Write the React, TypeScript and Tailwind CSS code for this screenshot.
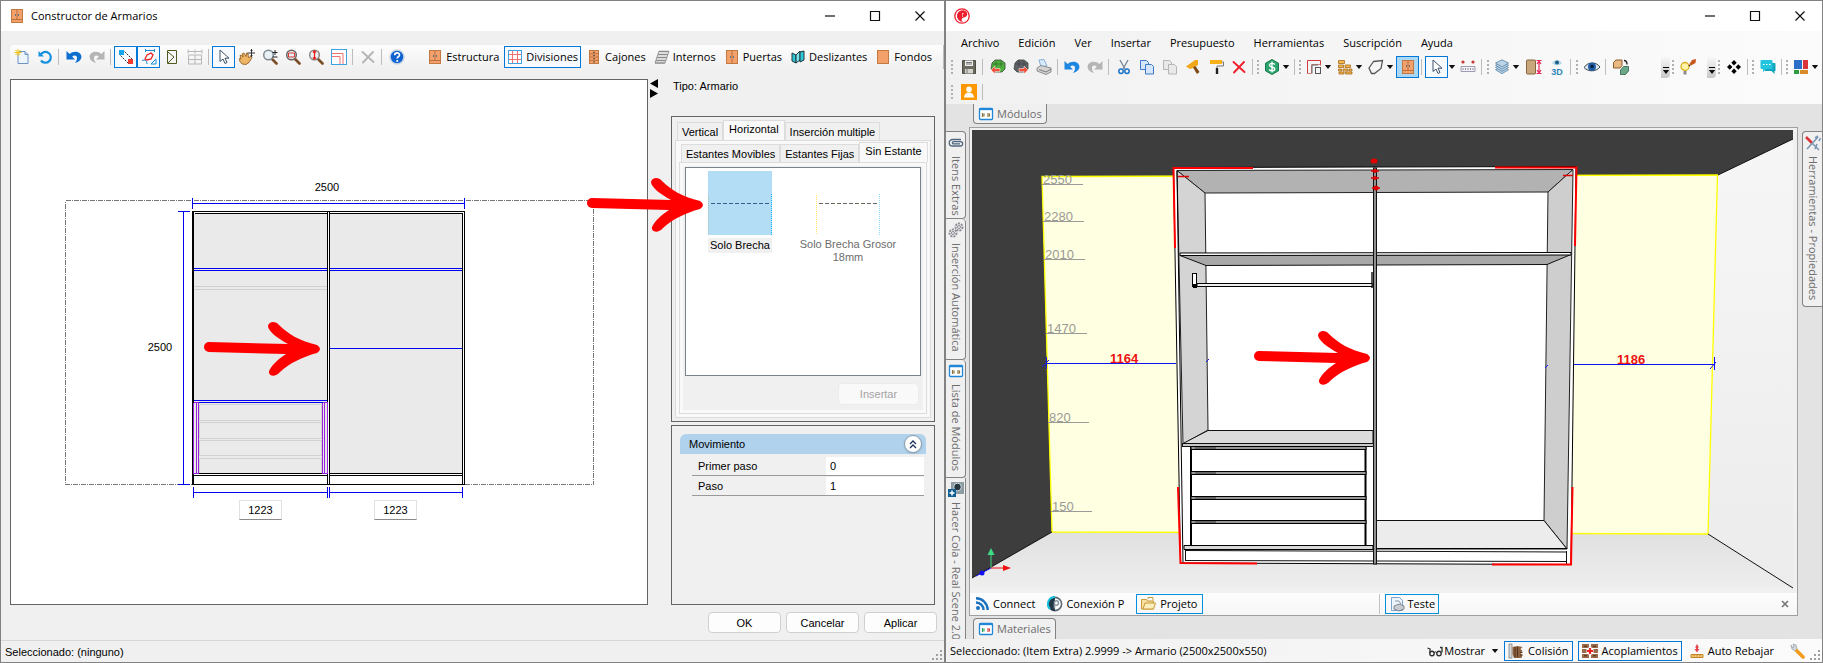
import React, { useState } from 'react';

type IconProps = { children: React.ReactNode; size?: string };

const Svg = ({ children, size = 'size-4' }: IconProps) => (
  <svg viewBox="0 0 16 16" className={`${size} shrink-0`} fill="none" aria-hidden="true">
    {children}
  </svg>
);

/* ---------- Iconos ---------- */

const WardrobeIcon = () => (
  <Svg>
    <rect x="2.5" y="1.5" width="11" height="13" fill="#f4a06b" stroke="#c27a45" />
    <path d="M8 1.5v10M2.5 11.5h11" stroke="#b86f3c" />
    <path d="M6.5 6v2M9.5 6v2" stroke="#5d7386" />
  </Svg>
);

const DoorsIcon = () => (
  <Svg>
    <rect x="2.5" y="1.5" width="11" height="13" fill="#f4a06b" stroke="#c27a45" />
    <path d="M8 1.5v13" stroke="#b86f3c" />
    <path d="M6.5 7v2M9.5 7v2" stroke="#5d7386" />
  </Svg>
);

const DrawersIcon = () => (
  <Svg>
    <rect x="3.5" y="1.5" width="9" height="13" fill="#f4a06b" stroke="#c27a45" />
    <path d="M3.5 4.8h9M3.5 8h9M3.5 11.3h9" stroke="#b86f3c" />
    <path d="M7 3.3h2M7 6.4h2M7 9.7h2M7 13h2" stroke="#5d4b3c" />
  </Svg>
);

const BackPanelIcon = () => (
  <Svg>
    <rect x="2.5" y="1.5" width="11" height="13" fill="#f4a06b" stroke="#c27a45" />
  </Svg>
);

const GridIcon = () => (
  <Svg>
    <rect x="1.5" y="1.5" width="13" height="13" fill="#fff" stroke="#3fa3e0" />
    <path d="M5.5 2v12M10.5 2v12M2 5.5h12M2 10.5h12" stroke="#f07070" />
  </Svg>
);

const InternalsIcon = () => (
  <Svg>
    <path d="M5 2.5h10M4 5.5h10M3 8.5h10M2 11.5h10M1 14h10" stroke="#8a8a8a" strokeWidth="1.6" />
    <path d="M5 2L1 14M15 2l-4 12" stroke="#9a9a9a" />
  </Svg>
);

const SlidingIcon = () => (
  <Svg>
    <path d="M2 4l4 2v8l-4-2z" fill="#2fc7d8" stroke="#20343a" />
    <path d="M6 6l4-4v9l-4 3z" fill="#7ae5ee" stroke="#20343a" />
    <path d="M10 3l4-1v9l-4 2z" fill="#2fc7d8" stroke="#20343a" />
  </Svg>
);

const NewIcon = () => (
  <Svg>
    <path d="M5 2.5h6l3 3v9H4V5" fill="#eef5fd" stroke="#6d94c4" />
    <path d="M11 2.5v3h3" fill="#bcd7f2" stroke="#6d94c4" />
    <path d="M4 0v7M.5 3.5h7M1.5 1l5 5M6.5 1l-5 5" stroke="#f0c419" />
  </Svg>
);

const RefreshIcon = () => (
  <Svg>
    <path d="M3.5 6A5.4 5.4 0 1 1 4 11.5" stroke="#1691e0" strokeWidth="2.2" />
    <path d="M1.5 2v5.5H7z" fill="#1691e0" />
  </Svg>
);

const UndoIcon = ({ color = '#0d6fd0' }: { color?: string }) => (
  <Svg>
    <path d="M.5 2v8.500H9L6.200 7.700C8 5.800 11 6.500 11 9c0 2-.8 3.500-2 5C13 13 15.700 10.500 15.400 7.300 15 2.800 8 .6 3.600 5.100z" fill={color} />
  </Svg>
);

const RedoIcon = () => (
  <Svg>
    <path d="M15.500 2v8.500H7l2.800-2.800C8 5.800 5 6.500 5 9c0 2 .8 3.500 2 5C3 13 .3 10.500.6 7.300 1 2.800 8 .6 12.400 5.100z" fill="#b5b5b5" />
  </Svg>
);

const SnapIcon = () => (
  <Svg>
    <rect x="1" y="1" width="5" height="5" fill="#16a6f0" />
    <rect x="10" y="10" width="5" height="5" fill="#f03a2e" />
    <path d="M6.500 2.500l8 8M2.500 6.500l8 8" stroke="#333" strokeDasharray="2 1" />
  </Svg>
);

const ShapesIcon = () => (
  <Svg>
    <path d="M4 1.500h9M4.500 0v3M13.500 0v3M1 11.500c3-1 5 0 5 3.500M10 15h5v-5z" stroke="#1b8fd6" />
    <path d="M4 10l2-4 4-2 2 2-2 4-4 1z" stroke="#f02020" strokeWidth="1.300" />
  </Svg>
);

const FlapIcon = () => (
  <Svg>
    <path d="M3.500 1.500h9v13h-9zM4 3l6 5-6 6" stroke="#4f5b1e" />
  </Svg>
);

const TableGridIcon = () => (
  <Svg>
    <path d="M1 2.500h14M1 .5v4M8 .5v4M15 .5v4M1.500 6h13v9h-13zM8 6v9M1.500 10.500h13" stroke="#b8b8b8" />
  </Svg>
);

const CursorIcon = () => (
  <Svg>
    <path d="M4 1v11.500l3-2.500 2 4.500 2-1-2-4.300h4z" fill="#fff" stroke="#3e4f66" />
  </Svg>
);

const PanIcon = () => (
  <Svg>
    <path d="M3 15c-2-2-3-4-2.500-5.500L2 10 1 6.500 2.500 6 4 8 3.500 4.500 5 4l2 3.500L7.500 4l1.500.5.5 4L12 7.500l1 1-3 5-3 2z" fill="#eeb566" stroke="#8a5418" strokeWidth=".8" />
    <path d="M12.500 0v8M8.500 4h7.500M11.500 1.500h2M11.500 6.500h2" stroke="#333" />
  </Svg>
);

const Lens = ({ children, ring = '#7f8c96' }: { children?: React.ReactNode; ring?: string }) => (
  <Svg>
    <path d="M10 10l4.500 4.500" stroke="#7a4d26" strokeWidth="2.600" strokeLinecap="round" />
    <circle cx="6.500" cy="6" r="4.800" fill="#e9f1f5" stroke={ring} strokeWidth="1.500" />
    {children}
  </Svg>
);

const CornerIcon = () => (
  <Svg>
    <rect x=".5" y=".5" width="15" height="15" fill="#fff" stroke="#3fa3e0" />
    <path d="M1 4.500h11V15M1 7.500h8V15" stroke="#f07070" />
  </Svg>
);

const DeleteIcon = ({ color = '#b5b5b5' }: { color?: string }) => (
  <Svg>
    <path d="M2.500 3l11 10M13 3L3 13.500" stroke={color} strokeWidth="1.900" strokeLinecap="round" />
  </Svg>
);

const HelpIcon = () => (
  <Svg>
    <circle cx="8" cy="8" r="7" fill="#0f62cf" stroke="#c9d6e6" strokeWidth="1.500" />
    <path d="M5.700 6.200c0-3 4.800-3 4.800-.3 0 1.700-2.300 1.800-2.300 3.600" stroke="#fff" strokeWidth="1.700" />
    <circle cx="8.200" cy="12" r="1.100" fill="#fff" />
  </Svg>
);

const SaveIcon = () => (
  <Svg>
    <path d="M1.500 1.500h13v13h-13z" fill="#6a6a60" stroke="#4d4d45" />
    <rect x="4" y="1.500" width="8" height="5.500" fill="#eee" />
    <rect x="4" y="10" width="8" height="4.500" fill="#d4d4cc" />
    <path d="M6 10v4M5 3.500h6M5 5h6" stroke="#777" />
  </Svg>
);

const CubeArrowIcon = ({ body, left }: { body: string; left?: boolean }) => (
  <Svg>
    <path d="M2 4l3-3h6l4 3v6l-3 3H4l-3-3z" fill={body} stroke="#3b4a38" strokeWidth=".8" />
    <path d="M3 5h10M6 2v6M11 2v6" stroke="#222" strokeOpacity=".35" />
    {left ? (
      <path d="M1 11l4-4v2.500h5v3H5V15z" fill="#f0503c" stroke="#fff" strokeWidth=".5" />
    ) : (
      <path d="M15 11l-4-4v2.500H6v3h5V15z" fill="#f0503c" stroke="#fff" strokeWidth=".5" />
    )}
  </Svg>
);

const PrinterIcon = () => (
  <Svg>
    <path d="M3 1l5-.5L11 7l-6 1z" fill="#d9ebfb" stroke="#6b9fd0" strokeWidth=".8" />
    <path d="M1 9l4-2.500L15 9v4l-5 2.500L1 12z" fill="#d4d4d4" stroke="#777" strokeWidth=".8" />
    <path d="M3 10.500l7 2.500 5-3" stroke="#666" strokeWidth=".8" />
  </Svg>
);

const ScissorsIcon = () => (
  <Svg>
    <path d="M4 1l5 9M12 1L7 10" stroke="#7a8a99" strokeWidth="1.400" />
    <circle cx="5" cy="12.300" r="2.200" stroke="#1a73c8" strokeWidth="1.500" />
    <circle cx="11" cy="12.300" r="2.200" stroke="#1a73c8" strokeWidth="1.500" />
  </Svg>
);

const CopyIcon = ({ line = '#3f78c8', fill = '#d5e6fa' }: { line?: string; fill?: string }) => (
  <Svg>
    <path d="M1.500 1.500h6l2 2v7h-8z" fill={fill} stroke={line} />
    <path d="M6.500 5.500h6l2 2v7.500h-8z" fill={fill} stroke={line} />
  </Svg>
);

const HammerIcon = () => (
  <Svg>
    <path d="M1 7.500L10 1h3v5L8 9 5 10z" fill="#f0a818" />
    <path d="M8 8.500l4 6.500 2.500-2-4-6z" fill="#7c4a16" />
  </Svg>
);

const RollerIcon = () => (
  <Svg>
    <rect x="2" y="1" width="12" height="4" fill="#f5b01a" />
    <path d="M14 3h1.500v4H9v3" stroke="#777" />
    <path d="M9 9v6" stroke="#222" strokeWidth="2.400" />
  </Svg>
);

const DollarIcon = () => (
  <Svg>
    <path d="M8 .5l6.500 3.700v7.600L8 15.500l-6.500-3.700V4.200z" fill="#2ba56d" stroke="#16784b" />
    <path d="M10.800 5.500C9.500 3.800 5.500 4 5.500 6.200 5.500 8.500 10.800 7.500 10.800 10c0 2.200-4.300 2.300-5.600.5M8 2.500v11" stroke="#fff" strokeWidth="1.300" />
  </Svg>
);

const WallIcon = () => (
  <Svg>
    <path d="M1.500 14.500v-13h13v5" stroke="#d33a3a" />
    <path d="M1.500 14.500h4v-9h9" stroke="#d98080" />
    <rect x="9.500" y="8.500" width="5" height="6" stroke="#555" />
    <path d="M6 14.500V6h6" stroke="#666" />
  </Svg>
);

const BricksIcon = () => (
  <Svg>
    <path d="M1.500 1.500h6v3h-6zM1.500 6h5v2.500h-5zM8 6h5.500v2.500H8zM1.500 10h3v2h-3zM6 10h5v2H6zM12 10h3v2h-3zM2 13h5v2H2zM8.500 13H15v2H8.500z" fill="#f4b84e" stroke="#a8691a" strokeWidth=".8" />
  </Svg>
);

const PolyIcon = () => (
  <Svg>
    <path d="M5.500 2.500l9-1-1.500 8-6.500 5H3.500L1 9z" stroke="#555" strokeWidth="1.300" />
  </Svg>
);

const MeasureIcon = () => (
  <Svg>
    <circle cx="3" cy="3" r="1.600" fill="#cc3333" />
    <circle cx="13" cy="3" r="1.600" fill="#cc3333" />
    <path d="M1 7.500h14v5H1z" fill="#f4f4f8" stroke="#9c9cae" />
    <path d="M3 9v2M5.500 9v2M8 9v2M10.500 9v2M13 9v2" stroke="#8888a0" />
  </Svg>
);

const LayersIcon = () => (
  <Svg>
    {[7.5, 5.200, 3, 0.8].map((y) => (
      <path key={y} d={`M8 ${y}l6.500 3.200-6.500 4-6.500-4z`} fill="#b9d4e8" stroke="#5c84a6" strokeWidth=".8" />
    ))}
  </Svg>
);

const DoorHeightIcon = () => (
  <Svg>
    <rect x=".5" y="1" width="9" height="14" rx="1" fill="#c9a67b" stroke="#86643d" />
    <path d="M10.500 1.500h5M10.500 14.500h5M13 2v12M11 5l2-3 2 3M11 11l2 3 2-3" stroke="#e8275a" strokeWidth="1.200" />
  </Svg>
);

const Eye3DIcon = () => (
  <Svg>
    <path d="M3 4c3-4 7-4 10 0-3 3-7 3-10 0z" fill="#b7d9e8" />
    <circle cx="8" cy="3.500" r="2" fill="#1c5f86" />
    <text x="8" y="15.500" textAnchor="middle" fontSize="9" fontWeight="700" fontFamily="Liberation Sans, sans-serif" fill="#2e86b8">
      3D
    </text>
  </Svg>
);

const EyeIcon = () => (
  <Svg>
    <path d="M0 8.500C4 2.500 12 2.500 16 8 12 13 4 13 0 8.500z" fill="#dfe7ee" stroke="#33414f" />
    <circle cx="8" cy="7.800" r="4" fill="#1c5ea8" />
    <circle cx="8" cy="7.500" r="1.700" fill="#0b1d33" />
  </Svg>
);

const BoxesIcon = () => (
  <Svg>
    <path d="M.5 3.500l2.500-2.500h6v5.500L7 9H.5z" fill="#e9b983" stroke="#8b5c2d" strokeWidth="1" />
    <path d="M7.500 11l3-3.500h5V12l-3 3.500h-5z" fill="#6aa889" stroke="#2f6049" strokeWidth=".8" />
    <path d="M11 1.500c2 0 3 1 3 4" stroke="#222" strokeWidth="1.400" />
  </Svg>
);

const BulbIcon = () => (
  <Svg>
    <circle cx="5" cy="7.500" r="4" fill="#fff3a8" stroke="#dcae23" strokeWidth="1.300" />
    <path d="M3.500 12h3v3.500h-3z" fill="#8d8d8d" />
    <path d="M10 6l-1 1" stroke="#222" strokeWidth="1.500" />
    <path d="M16 0l-.5 4-4.500 2.500-1.500-1.500L12 1z" fill="#c8561a" />
  </Svg>
);

const DiamondsIcon = () => (
  <Svg>
    <path d="M8 1l2.700 2.700L8 6.400 5.300 3.700zM8 9.600l2.700 2.700L8 15l-2.700-2.700zM3.700 5.300L6.400 8l-2.700 2.700L1 8zM12.300 5.300L15 8l-2.700 2.700L9.600 8z" fill="#000" />
  </Svg>
);

const ChatIcon = () => (
  <Svg>
    <path d="M4 4h10.500a1 1 0 0 1 1 1v7h-1v3l-3-3H5z" fill="#0ea5bd" />
    <path d="M1.500 1h10a1 1 0 0 1 1 1v7a1 1 0 0 1-1 1H6l-3 3v-3H1.500a1 1 0 0 1-1-1V2a1 1 0 0 1 1-1z" fill="#22c5dd" />
    <path d="M3 5.500h1.500M6 5.500h1.500M9 5.500h1.500" stroke="#fff" strokeWidth="1.200" />
  </Svg>
);

const ThemeIcon = () => (
  <Svg>
    <rect x="1" y="1" width="8" height="9" fill="#2b6fc9" />
    <rect x="10" y="1" width="5" height="9" fill="#d8343a" />
    <rect x="1" y="11" width="5" height="4" fill="#2e9c42" />
    <rect x="7" y="11" width="8" height="4" fill="#d98a2b" />
  </Svg>
);

const UserIcon = () => (
  <Svg>
    <rect width="16" height="16" fill="#ff9800" />
    <circle cx="8" cy="5.300" r="2.800" fill="#fff" />
    <path d="M3 13.500c0-2.500 2-4.500 3.500-5h3c1.500.5 3.500 2.500 3.500 5z" fill="#fff" />
  </Svg>
);

const ModuleIcon = ({ a = '#8a7440', b = '#8a7440' }: { a?: string; b?: string }) => (
  <Svg>
    <rect x="1.500" y="2.500" width="13" height="11" rx="1" fill="#fff" stroke="#1f86d8" strokeWidth="1.300" />
    <path d="M1 3.300h14" stroke="#1f86d8" strokeWidth="1.700" />
    <path d="M4.500 7v4M6 7.500v3" stroke={a} strokeWidth="1.200" />
    <path d="M10 7v4M11.500 7.500v3" stroke={b} strokeWidth="1.200" />
  </Svg>
);

const ClipIcon = () => (
  <Svg>
    <path d="M13 4.500H4.500a3.200 3.200 0 0 0 0 6.500H12.500a2 2 0 0 0 0-4.300H5.500a1 1 0 0 0 0 2.200H12" stroke="#4f667e" strokeWidth="1.300" />
  </Svg>
);

const GearsIcon = () => (
  <Svg>
    <circle cx="11" cy="5" r="3.500" stroke="#8c8c96" strokeWidth="2" strokeDasharray="2 1" />
    <circle cx="11" cy="5" r="1.500" stroke="#8c8c96" />
    <circle cx="5" cy="11" r="3.500" stroke="#8c8c96" strokeWidth="2" strokeDasharray="2 1" />
    <circle cx="5" cy="11" r="1.500" stroke="#8c8c96" />
  </Svg>
);

const CameraPlusIcon = () => (
  <Svg>
    <rect x="3" y="1" width="13" height="12" fill="#8d9ba3" />
    <circle cx="9.500" cy="6" r="3.800" fill="#263640" stroke="#d4dde2" />
    <rect x="0" y="8" width="8" height="8" fill="#0f5f92" />
    <path d="M4 9.500v5M1.500 12h5" stroke="#fff" strokeWidth="1.500" />
  </Svg>
);

const ToolsIcon = () => (
  <Svg>
    <path d="M1 2l6 6" stroke="#d8343a" strokeWidth="2.600" />
    <path d="M7 8l7 7M13 2L2 14" stroke="#7b96b5" strokeWidth="1.600" />
    <path d="M10 3l3-2M14 6l1.500-3M10 14l2-5" stroke="#7b96b5" strokeWidth="1.600" />
  </Svg>
);

const FeedIcon = () => (
  <Svg>
    <circle cx="4" cy="12" r="2" fill="#1870c0" />
    <path d="M2 6.500a7.500 7.500 0 0 1 7.500 7.500M2 2.300A11.700 11.700 0 0 1 13.700 14" stroke="#1870c0" strokeWidth="2.400" />
  </Svg>
);

const ConnectPIcon = () => (
  <Svg>
    <circle cx="8" cy="8" r="6.600" fill="#fff" stroke="#5d6a73" strokeWidth="1.600" />
    <path d="M8 1a7 7 0 0 0 0 14z" fill="#243746" />
    <path d="M8 1a7 7 0 0 0-5 12" stroke="#16c0dc" strokeWidth="2" />
    <path d="M7.500 12.500V6.500c0-2.500 4-2.500 4 .5s-4 2.500-4 1" stroke="#8896a0" strokeWidth="1.500" />
  </Svg>
);

const FolderIcon = () => (
  <Svg>
    <path d="M1.500 3.500h5l1 1.500h6v8h-12z" fill="#f7e0a0" stroke="#c79a35" />
    <path d="M3 13l2-6h10.500l-2 6z" fill="#fbeebd" stroke="#c79a35" />
    <path d="M8 3V1.500h5v3" stroke="#c79a35" />
  </Svg>
);

const PageIcon = () => (
  <Svg>
    <path d="M2.500 1.500h8l3 3v10h-11z" fill="#eef4fb" stroke="#7da3cf" />
    <path d="M5 10l5-2 5 2v3l-5 2-5-2z" fill="#c9ccd2" stroke="#6d727c" strokeWidth=".8" />
    <path d="M6 5h4l2 3" stroke="#8d96a5" />
  </Svg>
);

const GlassesIcon = () => (
  <Svg>
    <path d="M.5 5l2.500 1v4M13 4.500h2v5" stroke="#333" strokeWidth="1.300" />
    <circle cx="5" cy="10.500" r="2.200" stroke="#333" strokeWidth="1.400" />
    <circle cx="12" cy="10.500" r="2.200" stroke="#333" strokeWidth="1.400" />
    <path d="M7.200 10c.5-1.500 2-1.500 2.600 0" stroke="#333" />
  </Svg>
);

const CollisionIcon = () => (
  <Svg>
    <rect x="1" y="1" width="3" height="14" fill="#d6d6d6" stroke="#777" strokeWidth=".7" />
    <path d="M4.500 4l5-1 5 1-2 2 2 2-2 2 2 2-1 3H6l-1.500-4z" fill="#8d6140" />
    <path d="M7 4v10M9.500 4v10M12 9.500h2.500M12 12h2.500" stroke="#4d2f18" strokeWidth=".9" />
  </Svg>
);

const CouplingIcon = () => (
  <Svg>
    <path d="M0 1h7v14H0zM9 1h7v14H9z" fill="#9a6a4a" />
    <path d="M0 5.500h16M0 10.500h16" stroke="#fff" />
    <path d="M2 3.300h3M11 3.300h3M2 12.800h3M11 12.800h3" stroke="#4d2f18" />
    <path d="M8 4.500v7M4.500 8h7" stroke="#fff" strokeWidth="4" />
    <path d="M8 5v6M5 8h6" stroke="#ee2222" strokeWidth="2.200" />
  </Svg>
);

const LowerIcon = () => (
  <Svg>
    <path d="M8 1l2 3.500H9V6h1.500L8 9.500 5.500 6H7V4.500H6z" fill="#e8454e" />
    <path d="M2 11.500h12v3H2z" fill="#f6c877" stroke="#c28527" />
    <path d="M5 12v1.500M8 12v1.500M11 12v1.500" stroke="#c28527" />
  </Svg>
);

const WrenchIcon = () => (
  <Svg>
    <path d="M2 2l1 4 3 2 2-2-1-4-3-1 1 3-1 1z" fill="#d4d9df" stroke="#98a1ab" strokeWidth=".8" />
    <path d="M8 8l6 6" stroke="#f29b1d" strokeWidth="3.600" strokeLinecap="round" />
  </Svg>
);

const LogoIcon = () => (
  <Svg>
    <circle cx="8" cy="8" r="7.200" fill="#fff" stroke="#ed1c2e" strokeWidth="1.300" />
    <path d="M8.500 2.200A5.800 5.800 0 1 0 9 13.800C7 12.500 7.500 10.500 9 9.700 11.500 9.300 13.300 8 13.300 6.200 13.300 3.800 11 2.200 8.500 2.200z" fill="#ed1c2e" />
    <path d="M8.500 5v4M8.500 5.500h1.500" stroke="#fff" strokeWidth=".7" strokeOpacity=".8" />
  </Svg>
);

const RedArrow = () => (
  <path
    d="M5 20L84 22C73 16 64 9 64 4 65 -1 72 -1 75 3 84 12 96 19 113 23Q119 27 113 31C98 35 86 41 76 50 71 56 64 54 65 49 68 43 74 37 82 32L5 30A5 5 0 0 1 5 20Z"
    fill="#ff0000"
  />
);

/* ---------- Piezas comunes ---------- */

type ToolProps = { label: string; active?: boolean; children: React.ReactNode };

const Tool = ({ label, active, children }: ToolProps) => (
  <button
    type="button"
    aria-label={label}
    title={label}
    className={`flex h-[22px] w-[23px] shrink-0 items-center justify-center border ${
      active ? 'border-[#0078d7] bg-[#f7fbff]' : 'border-transparent'
    }`}
  >
    {children}
  </button>
);

const Sep = ({ wide }: { wide?: boolean }) => (
  <span className={`h-4 w-px shrink-0 bg-[#bdbdbd] ${wide ? 'mr-[3px] ml-[2px]' : 'mx-[2px]'}`} />
);

const Grip = () => (
  <span className="flex w-[6px] shrink-0 flex-col items-center gap-[2px]">
    {[0, 1, 2, 3].map((i) => (
      <span key={i} className="size-[2px] bg-[#b0b0b0]" />
    ))}
  </span>
);

const Caret = () => (
  <svg viewBox="0 0 10 5" className="h-[4px] w-[8px] shrink-0" aria-hidden="true">
    <path d="M1 0h8L5 5z" fill="#111" />
  </svg>
);

const CaretTool = ({ label, children }: { label: string; children: React.ReactNode }) => (
  <button type="button" aria-label={label} title={label} className="flex h-[22px] w-[31px] shrink-0 items-center justify-between pr-[2px] pl-[3px]">
    {children}
    <Caret />
  </button>
);

const Overflow = () => (
  <span className="flex h-[22px] w-[9px] shrink-0 flex-col items-center justify-end gap-[2px] rounded-br bg-gradient-to-b from-transparent to-[#c8c8c8] pb-1">
    <span className="h-px w-[6px] bg-black" />
    <Caret />
  </span>
);

const ResizeGrip = () => (
  <svg viewBox="0 0 12 12" className="size-3 shrink-0 self-end" fill="#a0a0a0" aria-hidden="true">
    <path d="M8 0h2v2H8zM8 4h2v2H8zM4 4h2v2H4zM8 8h2v2H8zM4 8h2v2H4zM0 8h2v2H0z" />
  </svg>
);

const WindowButtons = () => (
  <div className="flex">
    {[
      { label: 'Minimizar', d: 'M3 8h10' },
      { label: 'Maximizar', d: 'M4 3.500h8.500v9H3.500v-9z' },
      { label: 'Cerrar', d: 'M3.500 3.500l9 9M12.500 3.500l-9 9' },
    ].map((b) => (
      <button key={b.label} type="button" aria-label={b.label} className="flex h-[30px] w-[45px] items-center justify-center">
        <svg viewBox="0 0 16 16" className="size-4" fill="none" stroke="#111" strokeWidth="1.200">
          <path d={b.d} />
        </svg>
      </button>
    ))}
  </div>
);

/* ---------- Constructor de Armarios ---------- */

const modes = [
  { name: 'Estructura', icon: <WardrobeIcon /> },
  { name: 'Divisiones', icon: <GridIcon /> },
  { name: 'Cajones', icon: <DrawersIcon /> },
  { name: 'Internos', icon: <InternalsIcon /> },
  { name: 'Puertas', icon: <DoorsIcon /> },
  { name: 'Deslizantes', icon: <SlidingIcon /> },
  { name: 'Fondos', icon: <BackPanelIcon /> },
];

const BuilderToolbar = () => {
  const [mode, setMode] = useState('Divisiones');
  return (
    <div className="mt-[14px] ml-[9px] flex h-6 shrink-0 items-center justify-between rounded-l border-r border-[#bdbdbd] bg-gradient-to-b from-[#fdfdfd] to-[#f0f0f0] pr-2">
      <div className="flex items-center">
        <Tool label="Nuevo"><NewIcon /></Tool>
        <Tool label="Recargar"><RefreshIcon /></Tool>
        <Sep wide />
        <Tool label="Deshacer"><UndoIcon /></Tool>
        <Tool label="Rehacer"><RedoIcon /></Tool>
        <Sep wide />
        <Tool label="Ajustar" active><SnapIcon /></Tool>
        <Tool label="Formas" active><ShapesIcon /></Tool>
        <Tool label="Apertura"><FlapIcon /></Tool>
        <Tool label="Tabla"><TableGridIcon /></Tool>
        <Sep wide />
        <Tool label="Seleccionar" active><CursorIcon /></Tool>
        <Tool label="Mover"><PanIcon /></Tool>
        <Tool label="Zoom"><Lens><path d="M13 1v5M10.500 3.500h5M10.500 8h5" stroke="#222" /></Lens></Tool>
        <Tool label="Zoom ventana"><Lens ring="#6b6560"><path d="M3.500 4h6v4h-6z" stroke="#d93636" /></Lens></Tool>
        <Tool label="Zoom total"><Lens ring="#8a8480"><path d="M6.500 2v8M5 3.500L6.500 2 8 3.500M5 8.500L6.500 10 8 8.500" stroke="#f02020" strokeWidth="1.300" /></Lens></Tool>
        <Tool label="Esquina"><CornerIcon /></Tool>
        <Sep wide />
        <Tool label="Eliminar"><DeleteIcon /></Tool>
        <Sep wide />
        <Tool label="Ayuda"><HelpIcon /></Tool>
      </div>
      <div className="flex items-center gap-[2px]">
        {modes.map((m) => (
          <button
            key={m.name}
            type="button"
            onClick={() => setMode(m.name)}
            className={`flex h-[22px] items-center gap-[3px] border px-[2px] ${
              mode === m.name ? 'border-[#0078d7] bg-[#f7fbff]' : 'border-transparent'
            }`}
          >
            {m.icon}
            <span>{m.name}</span>
          </button>
        ))}
      </div>
    </div>
  );
};

const FrontView = () => (
  <svg viewBox="11 80 636 524" className="min-h-0 w-full flex-1" fill="none" shapeRendering="crispEdges">
    <rect x="65.500" y="200.500" width="528" height="284" stroke="#777" strokeDasharray="5 1 1 1" />
    <rect x="193" y="211" width="271" height="273" fill="#fff" />
    <rect x="194" y="213" width="269" height="261" fill="#eaeaea" />

    {/* barra y cajones */}
    <path d="M194 286.500h134M194 289.500h134" stroke="#cfcfcf" />
    <path d="M199.500 404.500h122v16h-122zM199.500 422.500h122v16h-122zM199.500 440.500h122v15h-122zM199.500 458.500h122v15h-122z" stroke="#d2d2d2" />

    {/* casco */}
    <path d="M192.500 211.500h272v273h-272zM194.500 213.500h268v271M193.500 212v272M194 473.500h268M194 475.500h268" stroke="#000" />
    <rect x="328" y="212" width="1" height="272" fill="#fff" />
    <path d="M327.500 212v272M329.500 212v272" stroke="#000" />

    {/* divisiones */}
    <path d="M194 268.500h133M194 270.500h133M330 268.500h132M330 270.500h132M194 400.500h133M194 402.500h133M330 348.500h132" stroke="#0000ee" />
    <path d="M193.500 402.500v71M196.500 402.500v71M198.500 402.500v71M322.500 402.500v71M324.500 402.500v71M327.500 402.500v71M193.500 402.500h5M193.500 473.500h5M322.500 402.500h5M322.500 473.500h5" stroke="#9a1fd8" />

    {/* cotas */}
    <path d="M192 203.500h273M192.500 198v11M464.500 198v11M183.500 211v274M178 211.500h12M178 484.500h12M193 492.500h134M330 492.500h132M193.500 487v11M327.500 487v11M329.500 487v11M462.500 487v11" stroke="#0000ee" />
    <g fontSize="11" fill="#000" textAnchor="middle" fontFamily="Liberation Sans, sans-serif">
      <text x="327" y="191">2500</text>
      <text x="160" y="351">2500</text>
    </g>
    <foreignObject x="239" y="500" width="43" height="21">
      <input aria-label="Ancho izquierdo" defaultValue="1223" className="block h-5 w-full border border-[#e2e2e2] border-b-[#8a8a8a] bg-white text-center text-[11px]" />
    </foreignObject>
    <foreignObject x="374" y="500" width="43" height="21">
      <input aria-label="Ancho derecho" defaultValue="1223" className="block h-5 w-full border border-[#e2e2e2] border-b-[#8a8a8a] bg-white text-center text-[11px]" />
    </foreignObject>
    <g transform="translate(204 322)" shapeRendering="auto">
      <RedArrow />
    </g>
  </svg>
);

const GapPreview = ({ selected }: { selected?: boolean }) => (
  <svg viewBox="0 0 64 64" className={`size-16 ${selected ? 'bg-[#b3dcf5]' : ''}`} fill="none" shapeRendering="crispEdges" aria-hidden="true">
    <path d="M3 32.500h59" stroke={selected ? '#3b5a86' : '#66665a'} strokeDasharray="4 2" />
    <path d="M.5 24v40" stroke={selected ? '#9ccbb8' : '#ffe45c'} strokeDasharray="1 1" />
    <path d="M63.500 23v41" stroke={selected ? '#10b8ff' : '#8fd8ff'} strokeDasharray="1 1" />
  </svg>
);

type TabsProps = { items: string[]; value: string; onChange: (v: string) => void };

const TabRow = ({ items, value, onChange }: TabsProps) => (
  <div className="flex h-5 items-end" role="tablist">
    {items.map((t) => (
      <button
        key={t}
        type="button"
        role="tab"
        aria-selected={t === value}
        onClick={() => onChange(t)}
        className={`border border-b-0 border-[#dcdcdc] whitespace-nowrap ${t === value ? 'h-5 bg-[#f9f9f9] px-[5px] pb-1' : 'h-[18px] bg-[#f0f0f0] px-1'}`}
      >
        {t}
      </button>
    ))}
  </div>
);

const DivisionPanel = () => {
  const [direction, setDirection] = useState('Horizontal');
  const [shelf, setShelf] = useState('Sin Estante');
  return (
    <section className="border border-[#646464] p-[3px]">
      <div className="pl-[2px]">
        <TabRow items={['Vertical', 'Horizontal', 'Inserción multiple']} value={direction} onChange={setDirection} />
      </div>
      <div className="border border-[#dcdcdc] bg-[#f9f9f9] px-[3px] pt-px pb-[3px]">
        <div className="pl-[2px]">
          <TabRow items={['Estantes Movibles', 'Estantes Fijas', 'Sin Estante']} value={shelf} onChange={setShelf} />
        </div>
        <div className="border border-[#dcdcdc] bg-[#f9f9f9] p-[3px]">
          <div className="bg-[#f0f0f0] px-[2px] pt-px pb-[5px]">
            <div className="relative flex h-[209px] items-start border border-[#7a828c] bg-white pt-[3px]">
              <button type="button" className="flex w-[108px] flex-col items-center gap-[3px]">
                <GapPreview selected />
                <span className="bg-[#f0f0f0] px-[2px] leading-[15px]">Solo Brecha</span>
              </button>
              <button type="button" className="flex w-[108px] flex-col items-center gap-[3px] text-[#6d6d6d]">
                <GapPreview />
                <span className="leading-[13px]">
                  Solo Brecha Grosor
                  <br />
                  18mm
                </span>
              </button>
              <svg viewBox="0 0 118 54" className="pointer-events-none absolute top-[10px] -left-[99px] z-10 h-[54px] w-[118px] overflow-visible" aria-hidden="true">
                <RedArrow />
              </svg>
            </div>
            <div className="mt-[7px] flex justify-end pr-[2px]">
              <button type="button" disabled className="h-[22px] w-[81px] rounded border border-[#ececec] bg-[#f9f9f9] text-[#a3a3a3]">
                Insertar
              </button>
            </div>
          </div>
        </div>
      </div>
    </section>
  );
};

const MovementPanel = () => (
  <section className="flex-1 border border-[#646464] px-2 pt-2">
    <div className="flex h-5 items-center justify-between rounded-t-md bg-[#b0d2ec] pr-1 pl-[9px]">
      <h2>Movimiento</h2>
      <button type="button" aria-label="Contraer" className="flex size-[18px] items-center justify-center rounded-full border border-[#8c9cb0] bg-white shadow">
        <svg viewBox="0 0 10 10" className="size-[10px]" fill="none" stroke="#1c2f5c" strokeWidth="1.300">
          <path d="M2 5l3-3 3 3M2 9l3-3 3 3" />
        </svg>
      </button>
    </div>
    <div className="mt-[2px] mr-[2px] ml-3">
      {[
        { id: 'primer-paso', label: 'Primer paso', value: '0' },
        { id: 'paso', label: 'Paso', value: '1' },
      ].map((row) => (
        <div key={row.id} className="flex h-5 items-center border-b border-[#9a9a9a] pl-[6px]">
          <label htmlFor={row.id} className="flex-1">{row.label}</label>
          <input id={row.id} defaultValue={row.value} className="h-[18px] w-[98px] bg-white pl-1" />
        </div>
      ))}
    </div>
  </section>
);

const BuilderWindow = () => (
  <div className="flex min-h-0 min-w-0 flex-col border border-[#828282] bg-[#f0f0f0]">
    <header className="flex h-[30px] shrink-0 items-center justify-between bg-white pr-[2px] pl-2">
      <div className="flex items-center gap-[6px]">
        <WardrobeIcon />
        <h1>Constructor de Armarios</h1>
      </div>
      <WindowButtons />
    </header>
    <BuilderToolbar />

    <main className="flex min-h-0 flex-1 px-[9px] pt-[10px] font-['Liberation_Sans',Arial,sans-serif] text-[11px]">
      <div className="flex min-w-0 flex-1 flex-col border border-[#646464] bg-white">
        <FrontView />
      </div>
      <div className="w-[23px] shrink-0 pl-[2px]">
        <svg viewBox="0 0 8 20" className="h-5 w-2" aria-hidden="true">
          <path d="M8 0v9L0 4.500zM0 10v9L8 14.500z" fill="#000" />
        </svg>
      </div>
      <aside className="flex w-[264px] shrink-0 flex-col">
        <p className="h-[37px] shrink-0 pl-[2px] leading-[14px]">Tipo: Armario</p>
        <DivisionPanel />
        <div className="h-[3px] shrink-0" />
        <MovementPanel />
      </aside>
    </main>

    <div className="flex shrink-0 justify-end gap-[5px] py-[7px] pr-[7px] font-['Liberation_Sans',Arial,sans-serif] text-[11px]">
      {['OK', 'Cancelar', 'Aplicar'].map((b) => (
        <button key={b} type="button" className="h-[21px] w-[73px] rounded border border-[#d0d0d0] bg-[#fdfdfd]">
          {b}
        </button>
      ))}
    </div>
    <footer className="flex h-[22px] shrink-0 items-center justify-between border-t border-[#d7d7d7] pl-1 font-['Liberation_Sans',Arial,sans-serif] text-[11px]">
      <span>Seleccionado: (ninguno)</span>
      <ResizeGrip />
    </footer>
  </div>
);

/* ---------- Ventana del proyecto ---------- */

const menus = ['Archivo', 'Edición', 'Ver', 'Insertar', 'Presupuesto', 'Herramientas', 'Suscripción', 'Ayuda'];

const heights = [
  { value: 2550, x: 1043, y: 184 },
  { value: 2280, x: 1044, y: 221 },
  { value: 2010, x: 1045, y: 259 },
  { value: 1470, x: 1047, y: 333 },
  { value: 820, x: 1049, y: 422 },
  { value: 150, x: 1052, y: 511 },
];

const drawerTops = [449, 474, 499, 523];

const Scene = () => (
  <svg viewBox="972 130 821 464" preserveAspectRatio="xMidYMin slice" className="min-h-0 w-full flex-1" fill="none" stroke="none">
    <defs>
      <linearGradient id="suelo" x1="0" y1="0" x2="0" y2="1">
        <stop offset="0" stopColor="#e0e0e0" />
        <stop offset="1" stopColor="#eeeeee" />
      </linearGradient>
      <linearGradient id="pared" x1="0" y1="0" x2="0" y2="1">
        <stop offset="0" stopColor="#f6f6f6" />
        <stop offset="1" stopColor="#ececec" />
      </linearGradient>
    </defs>
    <rect x="972" y="130" width="821" height="464" fill="#f0f0f0" />

    {/* habitación */}
    <path d="M972 578L1052 532 1708 534 1793 588H972z" fill="url(#suelo)" />
    <path d="M1793 139L1718 175 1708 534 1793 588z" fill="url(#pared)" />
    <path d="M972 130H1793V139L1718 175 1042 176 1052 532 972 578z" fill="#3d3d3d" />
    <path d="M1042 176.500L1717.500 175 1708 534 1052 532z" fill="#ffffe1" stroke="#ffff00" strokeWidth="1.300" />
    <path d="M972 578L1052 532M1708 534L1793 588M1718 175L1793 139" stroke="#111" />

    {/* alturas */}
    <g fontFamily="Liberation Sans, sans-serif" fontSize="13" fill="#9a9a96">
      {heights.map((h) => (
        <g key={h.value}>
          <text x={h.x} y={h.y}>{h.value}</text>
          <path d={`M${h.x - 1} ${h.y + 0.5}h41`} stroke="#9a9a96" />
        </g>
      ))}
    </g>

    {/* armario */}
    <path d="M1173.500 167.500L1576 166.500 1571 564.500 1180.500 563z" fill="#fff" stroke="#000" />
    <path d="M1177 170.500L1573 169.500 1548 192 1205 193z" fill="#b2b2b2" stroke="#222" />
    <path d="M1177 170.500L1205 193 1208 430 1183 444z" fill="#d4d4d4" stroke="#222" />
    <path d="M1573 169.500L1548 192 1544 520.500 1567 549z" fill="#cecece" stroke="#222" />
    <path d="M1376 520.500H1544L1567 549H1376z" fill="#ececec" stroke="#111" />
    <path d="M1177 170.500L1183 563" stroke="#000" />

    {/* estante superior */}
    <path d="M1180 255.500L1571 254.500 1547 264.500 1206 265.500z" fill="#a8a8a8" stroke="#111" />
    <path d="M1180 253L1571 252.500V255L1180 255.500z" fill="#fff" stroke="#000" />

    {/* barra de colgar */}
    <rect x="1192.500" y="273.500" width="4" height="13" fill="#fff" stroke="#000" />
    <rect x="1193" y="284" width="4" height="4" fill="#000" />
    <rect x="1371" y="272" width="3" height="16" fill="#555" />
    <rect x="1197" y="283.500" width="175" height="3" fill="#eee" stroke="#000" />

    {/* cajonera */}
    <path d="M1183 443.500L1208 430.500H1373V443.500z" fill="#dcdcdc" stroke="#111" />
    <rect x="1182.500" y="443.500" width="191" height="3" fill="#c8c8c8" stroke="#111" />
    <path d="M1191 447v99M1365.500 447v99" stroke="#000" strokeWidth="2" />
    {drawerTops.map((y) => (
      <g key={y}>
        <rect x="1191" y={y - 2.5} width="175" height="3" fill="#999" stroke="#000" />
        <path d={`M1195 ${y - 1}h21`} stroke="#333" />
      </g>
    ))}
    <path d="M1184 545.500H1373V549.500H1184zM1377 548.500H1567" fill="#d8d8d8" stroke="#000" />
    <path d="M1185 550.500L1567 552M1185.500 560.500L1567 561.500M1185.500 551v10M1566.500 551v13" stroke="#111" />

    {/* divisor central */}
    <rect x="1373.500" y="168" width="3" height="396" fill="#909090" stroke="#111" />

    {/* esquinas de selección */}
    <path d="M1253 168H1173.500L1175 248M1495 167.500H1576.500L1575 246M1178 487L1180.500 563 1257 563.500M1572.500 487L1571 564.500H1492" stroke="#ff0000" strokeWidth="2" />
    <path d="M1178 176.500h11M1563 175.500h10M1371 171h8M1371 178h8M1372 188h8" stroke="#e00000" strokeWidth="1.500" />
    <g fill="#e00000">
      <ellipse cx="1374" cy="161" rx="3.500" ry="2.500" />
      <circle cx="1375" cy="171" r="2" />
      <circle cx="1375" cy="178" r="2" />
      <circle cx="1376" cy="188" r="2.500" />
    </g>

    {/* distancias a pared */}
    <path d="M1046 363.500H1176M1046.500 357v12M1042 367l7-7M1574 364.500H1714M1714.500 357v13M1710 369l6-7M1206 362l3-3M1545 368l3-3" stroke="#1414f0" />
    <g fontFamily="Liberation Sans, sans-serif" fontSize="13" fontWeight="700" fill="#ee1111">
      <text x="1110" y="363">1164</text>
      <text x="1617" y="364">1186</text>
    </g>

    {/* ejes */}
    <path d="M991 568V553" stroke="#3ddc84" />
    <path d="M991 548l3.500 7h-7z" fill="#3ddc84" />
    <path d="M991 568H1004" stroke="#f01010" />
    <path d="M1011 568l-8-3v6z" fill="#f01010" />
    <path d="M991 568L976 576" stroke="#1010f0" />
    <circle cx="982" cy="573" r="2.500" fill="#1010f0" />

    <g transform="translate(1254 331)">
      <RedArrow />
    </g>
  </svg>
);

type SideTabProps = { label: string; icon: React.ReactNode; className: string };

const SideTab = ({ label, icon, className }: SideTabProps) => (
  <button
    type="button"
    className={`flex w-5 flex-col items-center gap-[5px] overflow-hidden border border-[#828282] bg-[#f0f0f0] pt-[3px] text-[#6d6d6d] ${className}`}
  >
    {icon}
    <span className="whitespace-nowrap [writing-mode:vertical-rl]">{label}</span>
  </button>
);

const ProjectToolbar = () => (
  <div className="flex h-[25px] items-center justify-between pr-px pl-[3px]">
    <div className="flex items-center">
      <Grip />
      <span className="w-[2px]" />
      <Tool label="Guardar"><SaveIcon /></Tool>
      <Sep wide />
      <Tool label="Importar"><CubeArrowIcon body="#4caf3c" left /></Tool>
      <Tool label="Exportar"><CubeArrowIcon body="#5d6166" /></Tool>
      <Tool label="Imprimir"><PrinterIcon /></Tool>
      <Sep />
      <Tool label="Deshacer"><UndoIcon color="#1c86e0" /></Tool>
      <Tool label="Rehacer"><RedoIcon /></Tool>
      <Sep wide />
      <Tool label="Cortar"><ScissorsIcon /></Tool>
      <Tool label="Copiar"><CopyIcon /></Tool>
      <Tool label="Pegar"><CopyIcon line="#b5b5b5" fill="#e9e9e9" /></Tool>
      <Tool label="Martillo"><HammerIcon /></Tool>
      <Tool label="Pintar"><RollerIcon /></Tool>
      <Tool label="Eliminar"><DeleteIcon color="#f0202c" /></Tool>
      <Sep />
      <Grip />
      <CaretTool label="Precios"><DollarIcon /></CaretTool>
      <Sep />
      <Grip />
      <CaretTool label="Paredes"><WallIcon /></CaretTool>
      <CaretTool label="Ladrillos"><BricksIcon /></CaretTool>
      <CaretTool label="Contorno"><PolyIcon /></CaretTool>
      <button type="button" aria-label="Armario" className="flex h-[22px] w-[23px] items-center justify-center border border-[#0078d7] bg-[#a9d7f5]">
        <WardrobeIcon />
      </button>
      <Sep wide />
      <Tool label="Seleccionar" active><CursorIcon /></Tool>
      <Caret />
      <Tool label="Medir"><MeasureIcon /></Tool>
      <Sep wide />
      <Grip />
      <CaretTool label="Capas"><LayersIcon /></CaretTool>
      <Tool label="Altura"><DoorHeightIcon /></Tool>
      <Tool label="Vista 3D"><Eye3DIcon /></Tool>
      <Sep wide />
      <Grip />
      <Tool label="Ver"><EyeIcon /></Tool>
      <Sep wide />
      <Tool label="Cajas"><BoxesIcon /></Tool>
    </div>
    <div className="flex items-center">
      <Overflow />
      <Grip />
      <Tool label="Luz"><BulbIcon /></Tool>
      <span className="w-2" />
      <Overflow />
      <Grip />
      <Tool label="Mosaico"><DiamondsIcon /></Tool>
      <Sep />
      <Grip />
      <Tool label="Chat"><ChatIcon /></Tool>
      <Sep />
      <Grip />
      <CaretTool label="Tema"><ThemeIcon /></CaretTool>
    </div>
  </div>
);

const ProjectWindow = () => (
  <div className="flex min-h-0 min-w-0 flex-col border border-[#828282] bg-[#e3e3e3]">
    <header className="flex h-[30px] shrink-0 items-center justify-between bg-white pl-2">
      <LogoIcon />
      <WindowButtons />
    </header>
    <div className="shrink-0 bg-gradient-to-r from-[#f1f1f1] to-[#fbfbfb]">
      <nav className="flex h-[23px] items-center gap-[19px] pl-[15px]">
        {menus.map((m) => (
          <button key={m} type="button">{m}</button>
        ))}
      </nav>
      <ProjectToolbar />
      <div className="flex h-[25px] items-center pl-[3px]">
        <Grip />
        <span className="w-[2px]" />
        <Tool label="Usuario"><UserIcon /></Tool>
        <Sep />
      </div>
    </div>

    <main className="flex min-h-0 flex-1">
      <div className="flex w-5 shrink-0 flex-col pt-[27px]">
        <SideTab label="Itens Extras" icon={<ClipIcon />} className="h-[88px] shrink-0 rounded-r border-l-0" />
        <SideTab label="Inserción Automática" icon={<GearsIcon />} className="h-[141px] shrink-0 rounded-r border-t-0 border-l-0" />
        <SideTab label="Lista de Módulos" icon={<ModuleIcon />} className="h-[118px] shrink-0 rounded-r border-t-0 border-l-0" />
        <SideTab label="Hacer Cola - Real Scene 2.0" icon={<CameraPlusIcon />} className="min-h-0 flex-1 border-y-0 border-l-0" />
      </div>

      <div className="flex min-w-0 flex-1 flex-col px-[3px]">
        <div className="flex h-[23px] shrink-0 items-start pl-1">
          <button type="button" className="flex h-5 items-center gap-[3px] rounded-b border border-t-0 border-[#828282] bg-[#f0f0f0] px-1 text-[#6d6d6d]">
            <ModuleIcon />
            Módulos
          </button>
        </div>
        <div className="flex min-h-0 flex-1 flex-col border border-[#a0a0a0] bg-[#f0f0f0]">
          <div className="flex min-h-0 flex-1 flex-col pt-[2px] pr-1 pl-[2px]">
            <Scene />
          </div>
          <div className="flex h-[22px] shrink-0 items-center bg-gradient-to-b from-[#fdfdfd] to-[#f6f6f6]">
            <div className="flex flex-1 items-center gap-2 border-r border-[#c4c4c4] pl-1">
              <button type="button" className="flex items-center gap-[3px]"><FeedIcon />Connect</button>
              <button type="button" className="flex items-center gap-[3px] pl-1"><ConnectPIcon />Conexión P</button>
              <button type="button" className="ml-1 flex h-5 items-center gap-1 border border-[#0090e0] px-[3px] pr-[5px]"><FolderIcon />Projeto</button>
            </div>
            <div className="flex flex-1 items-center justify-between pr-2 pl-[5px]">
              <button type="button" className="flex h-5 items-center gap-[3px] border border-[#0090e0] px-[3px]"><PageIcon />Teste</button>
              <button type="button" aria-label="Cerrar pestaña">
                <svg viewBox="0 0 8 8" className="size-2" stroke="#777" strokeWidth="1.700"><path d="M1 1l6 6M7 1L1 7" /></svg>
              </button>
            </div>
          </div>
        </div>
        <div className="flex h-[23px] shrink-0 items-end pl-1">
          <button type="button" className="flex h-[21px] items-center gap-[3px] rounded-t border border-b-0 border-[#828282] bg-[#f0f0f0] px-1 text-[#6d6d6d]">
            <ModuleIcon a="#2da56a" b="#e04545" />
            Materiales
          </button>
        </div>
      </div>

      <div className="flex w-[21px] shrink-0 flex-col items-end pt-[27px]">
        <SideTab label="Herramientas - Propiedades" icon={<ToolsIcon />} className="h-[176px] shrink-0 rounded-l border-r-0" />
      </div>
    </main>

    <footer className="flex h-[23px] shrink-0 items-center justify-between bg-gradient-to-r from-[#f1f1f1] to-[#fbfbfb] pl-1">
      <span>Seleccionado: (Item Extra) 2.9999 -&gt; Armario (2500x2500x550)</span>
      <div className="flex items-center gap-[5px] self-stretch">
        <button type="button" className="flex items-center gap-px"><GlassesIcon />Mostrar<span className="w-1" /><Caret /></button>
        <button type="button" className="flex h-5 items-center gap-1 border border-[#0078d7] px-[3px]"><CollisionIcon />Colisión</button>
        <button type="button" className="flex h-5 items-center gap-1 border border-[#0078d7] px-[3px]"><CouplingIcon />Acoplamientos</button>
        <button type="button" className="flex items-center gap-[3px] pl-[2px]"><LowerIcon />Auto Rebajar</button>
        <span className="pl-[10px]"><WrenchIcon /></span>
        <ResizeGrip />
      </div>
    </footer>
  </div>
);

export default function App() {
  return (
    <div className="grid h-screen grid-cols-[945fr_878fr] grid-rows-1 overflow-hidden font-['Open_Sans','Segoe_UI',sans-serif] text-[11px] leading-4 text-black">
      <BuilderWindow />
      <ProjectWindow />
    </div>
  );
}
